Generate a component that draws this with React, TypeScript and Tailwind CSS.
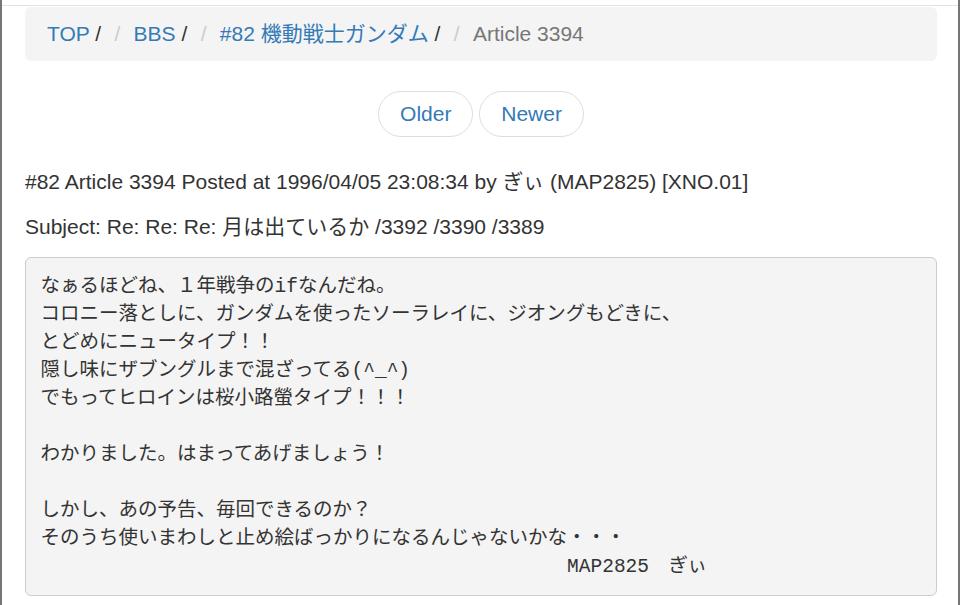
import React from 'react';

const CRUMBS = [
  { label: 'TOP', link: true },
  { label: 'BBS', link: true },
  { label: '#82 機動戦士ガンダム', link: true },
  { label: 'Article 3394', link: false },
];

const BODY = [
  'なぁるほどね、１年戦争のifなんだね。',
  'コロニー落としに、ガンダムを使ったソーラレイに、ジオングもどきに、',
  'とどめにニュータイプ！！',
  '隠し味にザブングルまで混ざってる(^_^)',
  'でもってヒロインは桜小路螢タイプ！！！',
  '',
  'わかりました。はまってあげましょう！',
  '',
  'しかし、あの予告、毎回できるのか？',
  'そのうち使いまわしと止め絵ばっかりになるんじゃないかな・・・',
  ' '.repeat(45) + 'MAP2825　ぎぃ',
].join('\n');

export default function App() {
  return (
    <div className="min-h-screen bg-white border-x-2 border-[#767676] text-[#333] text-[21px] leading-[30px] font-['Liberation_Sans','Noto_Sans_CJK_JP',sans-serif]">
      {/* top rule */}
      <div className="h-[5px]" />
      <div className="h-px bg-[#e2e2e2]" />

      <div className="pl-[23px] pr-[21px] pt-px">
        {/* ── BREADCRUMB ── */}
        <ol className="mb-[30px] rounded-[6px] bg-[#f4f4f4] px-[22px] py-[12px] whitespace-nowrap">
          {CRUMBS.map((c, i) => (
            <React.Fragment key={c.label}>
              {i > 0 && ' '}
              <li className="inline-block">
                {i > 0 && <span className="px-[7.5px] text-[#ccc]">/&nbsp;</span>}
                {c.link ? (
                  <>
                    <a className="text-[#337ab7]">{c.label}</a> /
                  </>
                ) : (
                  <span className="text-[#777]">{c.label}</span>
                )}
              </li>
            </React.Fragment>
          ))}
        </ol>

        {/* ── PAGER ── */}
        <ul className="my-[30px] text-center">
          <li className="inline">
            <a className="inline-block rounded-[23px] border border-[#ddd] bg-white px-[21px] py-[7px] text-[#337ab7]">Older</a>
          </li>{' '}
          <li className="inline">
            <a className="inline-block rounded-[23px] border border-[#ddd] bg-white px-[21px] py-[7px] text-[#337ab7]">Newer</a>
          </li>
        </ul>

        <p className="mb-[15px]">#82 Article 3394 Posted at 1996/04/05 23:08:34 by ぎぃ (MAP2825) [XNO.01]</p>
        <p className="mb-[15px]">Subject: Re: Re: Re: 月は出ているか /3392 /3390 /3389</p>

        <pre className="whitespace-pre rounded-[6px] border border-[#ccc] bg-[#f4f4f4] p-[14.5px] text-[19.5px] leading-[28px] text-[#333] font-['Liberation_Mono','Noto_Sans_CJK_JP',monospace]">
          {BODY}
        </pre>
      </div>
    </div>
  );
}
